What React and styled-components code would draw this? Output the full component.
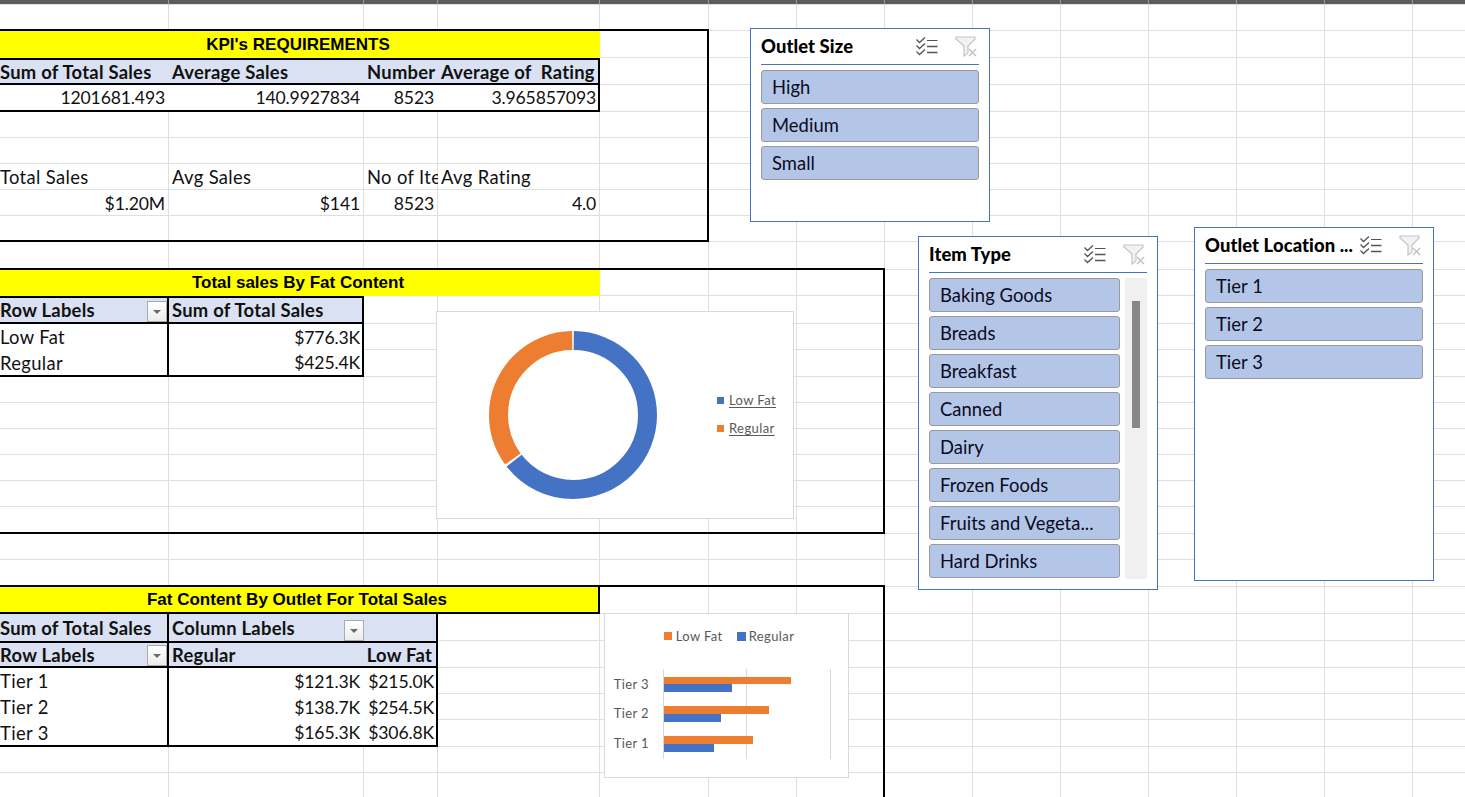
import styled, { createGlobalStyle } from "styled-components";

const colLines = [168, 363, 437, 599, 708, 796, 884, 972, 1060, 1148, 1236, 1324, 1412, 1500];
const rowLines = [
  4, 30, 57, 84, 111, 137, 163, 189, 215, 241, 269, 295, 323, 349, 376, 402,
  428, 454, 480, 506, 533, 559, 586, 613, 640, 667, 693, 719, 746, 772, 798,
];

const toTracks = (lines) =>
  lines.map((line, i) => `${i === 0 ? line + 1 : line - lines[i - 1]}px`).join(" ");

const GlobalStyle = createGlobalStyle`
  html, body {
    margin: 0;
    padding: 0;
    background: #ffffff;
    overflow: hidden;
  }
`;

const Page = styled.div`
  position: relative;
  width: 1465px;
  height: 797px;
  overflow: hidden;
  font-family: "Lato", "Liberation Sans", sans-serif;
  color: #111111;
`;

const Sheet = styled.div`
  display: grid;
  grid-template-columns: ${toTracks(colLines)};
  grid-template-rows: ${toTracks(rowLines)};
  width: 1501px;
  height: 799px;
`;

const GridCell = styled.div`
  box-sizing: border-box;
  grid-row: ${(p) => p.$row};
  grid-column: ${(p) => p.$col};
  border-right: 1px solid ${(p) => (p.$row === 1 ? "#9a9a9a" : "#dfdfdf")};
  border-bottom: 1px solid #dfdfdf;
  background: ${(p) => (p.$row === 1 ? "#5d5d5d" : "transparent")};
`;

const thick = "2px solid #000000";

const rightPad = (p) => {
  if (!p.$right) return "0";
  return p.$edges?.includes("r") ? "2px" : "4px";
};

const Cell = styled.div`
  box-sizing: border-box;
  grid-row: ${(p) => p.$row};
  grid-column: ${(p) => p.$col} / span ${(p) => p.$span || 1};
  display: flex;
  align-items: center;
  justify-content: ${(p) => (p.$right ? "flex-end" : "flex-start")};
  padding: 0 ${rightPad} 0 ${(p) => (p.$col === 1 ? "0" : "3px")};
  overflow: hidden;
  white-space: pre;
  font-size: ${(p) => (p.$right ? "17.6px" : "18.4px")};
  letter-spacing: ${(p) => (p.$right ? "-0.15px" : "0.35px")};
  background: ${(p) => p.$fill || "transparent"};
  border-top: ${(p) => (p.$edges?.includes("t") ? thick : "none")};
  border-right: ${(p) => (p.$edges?.includes("r") ? thick : "none")};
  border-bottom: ${(p) => (p.$edges?.includes("b") ? thick : "none")};
`;

const TitleCell = styled(Cell)`
  justify-content: center;
  padding: 0 4px 0 0;
  font-family: "Liberation Sans", Arial, sans-serif;
  font-size: 17px;
  letter-spacing: 0;
  font-weight: 700;
  background: #ffff00;
  color: #000000;
`;

const HeadCell = styled(Cell)`
  padding-right: ${(p) => (p.$right ? "4px" : "0")};
  font-size: 18.4px;
  letter-spacing: 0.26px;
  font-weight: 700;
  background: #d9e1f2;
`;

const Outline = styled.div`
  box-sizing: border-box;
  grid-row: ${(p) => p.$from} / ${(p) => p.$to};
  grid-column: 1 / ${(p) => p.$endCol};
  margin-top: -2px;
  border: ${thick};
  border-left: none;
  border-bottom: ${(p) => (p.$open ? "none" : thick)};
  pointer-events: none;
`;

const FilterButton = styled.span`
  box-sizing: border-box;
  display: flex;
  align-items: center;
  justify-content: center;
  flex: none;
  width: 20px;
  height: 21px;
  margin-left: auto;
  align-self: flex-end;
  border: 1px solid #ababab;
  background: linear-gradient(#ffffff, #ececec);
  &::after {
    content: "";
    border-left: 4px solid transparent;
    border-right: 4px solid transparent;
    border-top: 4px solid #6a6a6a;
  }
`;

const Slicer = styled.section`
  box-sizing: border-box;
  position: absolute;
  left: ${(p) => p.$x}px;
  top: ${(p) => p.$y}px;
  width: 240px;
  height: ${(p) => p.$h}px;
  padding: 0 10px;
  background: #ffffff;
  border: 1px solid #4472c4;
`;

const SlicerHead = styled.header`
  display: flex;
  align-items: center;
  height: 35px;
  border-bottom: 1px solid #4472c4;
`;

const SlicerTitle = styled.h3`
  flex: 1;
  margin: 0 0 2px;
  font-size: 18.4px;
  font-weight: 900;
  letter-spacing: 0.1px;
  white-space: nowrap;
  color: #000000;
`;

const HeadIcons = styled.div`
  display: flex;
  align-items: center;
  gap: 17px;
  margin-right: 2px;
`;

const SlicerBody = styled.div`
  display: flex;
  gap: 5px;
  margin-top: 5px;
`;

const SlicerList = styled.ul`
  flex: 1;
  display: flex;
  flex-direction: column;
  gap: 4px;
  margin: 0;
  padding: 0;
  list-style: none;
`;

const SlicerItem = styled.li`
  box-sizing: border-box;
  display: flex;
  align-items: center;
  height: 34px;
  padding-left: 10px;
  background: #b4c6e7;
  border: 1px solid #9a9a9a;
  border-radius: 3px;
  font-size: 18.4px;
  letter-spacing: 0.05px;
  color: #0b0b1e;
  white-space: nowrap;
`;

const ScrollTrack = styled.div`
  flex: none;
  width: 22px;
  height: 301px;
  padding: 23px 7px 0;
  box-sizing: border-box;
  background: #f0f0f0;
`;

const ScrollThumb = styled.div`
  height: 127px;
  background: #878787;
`;

const ChartFrame = styled.figure`
  box-sizing: border-box;
  position: absolute;
  left: ${(p) => p.$x}px;
  top: ${(p) => p.$y}px;
  width: ${(p) => p.$w}px;
  height: ${(p) => p.$h}px;
  margin: 0;
  background: #ffffff;
  border: 1px solid #d9d9d9;
`;

const DonutLayout = styled.div`
  display: flex;
  align-items: center;
  height: 100%;
  padding-left: 51px;
  gap: 59px;
`;

const DonutLegend = styled.div`
  display: flex;
  flex-direction: column;
  gap: 12px;
  margin-top: -2px;
`;

const LegendItem = styled.div`
  display: flex;
  align-items: center;
  gap: ${(p) => p.$gap || 5}px;
  font-size: 13px;
  letter-spacing: 0.4px;
  line-height: 16px;
  color: #595959;
`;

const Swatch = styled.i`
  display: block;
  width: ${(p) => p.$size || 7}px;
  height: ${(p) => p.$size || 7}px;
  background: ${(p) => p.$color};
`;

const LegendText = styled.span`
  text-decoration: ${(p) => (p.$link ? "underline" : "none")};
  text-underline-offset: 2px;
`;

const BarLegend = styled.div`
  display: flex;
  justify-content: center;
  gap: 14px;
  padding: 14px 0 0 5px;
`;

const PlotSvg = styled.svg`
  display: block;
  margin-top: 21px;
  font-family: "Lato", "Liberation Sans", sans-serif;
  font-size: 13px;
  letter-spacing: 0.4px;
`;

const blue = "#4472c4";
const orange = "#ed7d31";

const ChecklistIcon = () => (
  <svg width="22" height="19" viewBox="0 0 22 19" fill="none" stroke="#555555">
    <path d="M0.5 2.5L3.5 5.5L9 0.5M0.5 8.5L3.5 11.5L9 6.5M0.5 14.5L3.5 17.5L9 12.5" strokeWidth="1.3" />
    <path d="M11 3.5H21.5" strokeWidth="1" />
    <path d="M11 9.5H21.5M11 15.5H21.5" strokeWidth="1.7" />
  </svg>
);

const ClearFilterIcon = () => (
  <svg width="22" height="21" viewBox="0 0 22 21" fill="none">
    <path d="M1 1H20V3L13 10V17L9 20V10L1 3Z" fill="#f2f2f2" stroke="#c4c4c4" strokeWidth="1.2" />
    <path d="M14 13L21 20M21 13L14 20" stroke="#bcbcbc" strokeWidth="1.2" />
  </svg>
);

const SlicerBox = ({ title, x, y, h, items, scroll }) => (
  <Slicer $x={x} $y={y} $h={h}>
    <SlicerHead>
      <SlicerTitle>{title}</SlicerTitle>
      <HeadIcons>
        <ChecklistIcon />
        <ClearFilterIcon />
      </HeadIcons>
    </SlicerHead>
    <SlicerBody>
      <SlicerList>
        {items.map((item) => (
          <SlicerItem key={item}>{item}</SlicerItem>
        ))}
      </SlicerList>
      {scroll && (
        <ScrollTrack>
          <ScrollThumb />
        </ScrollTrack>
      )}
    </SlicerBody>
  </Slicer>
);

const tierBars = [
  { label: "Tier 3", y: 12, low: 127, reg: 68, lowH: 7 },
  { label: "Tier 2", y: 41, low: 105, reg: 57, lowH: 8 },
  { label: "Tier 1", y: 71, low: 89, reg: 50, lowH: 8 },
];

const gridCells = rowLines.flatMap((_, r) =>
  colLines.map((_, c) => <GridCell key={`${r}-${c}`} $row={r + 1} $col={c + 1} />)
);

export default function App() {
  return (
    <Page>
      <GlobalStyle />
      <Sheet>
        {gridCells}

        <TitleCell $row={3} $col={1} $span={4}>KPI's REQUIREMENTS</TitleCell>
        <HeadCell $row={4} $col={1} $edges="tb">Sum of Total Sales</HeadCell>
        <HeadCell $row={4} $col={2} $edges="tb">Average Sales</HeadCell>
        <HeadCell $row={4} $col={3} $edges="tb">Number</HeadCell>
        <HeadCell $row={4} $col={4} $edges="tbr">Average of  Rating</HeadCell>
        <Cell $row={5} $col={1} $right $fill="#fff" $edges="b">1201681.493</Cell>
        <Cell $row={5} $col={2} $right $fill="#fff" $edges="b">140.9927834</Cell>
        <Cell $row={5} $col={3} $right $fill="#fff" $edges="b">8523</Cell>
        <Cell $row={5} $col={4} $right $fill="#fff" $edges="br">3.965857093</Cell>

        <Cell $row={8} $col={1}>Total Sales</Cell>
        <Cell $row={8} $col={2}>Avg Sales</Cell>
        <Cell $row={8} $col={3}>No of Ite</Cell>
        <Cell $row={8} $col={4}>Avg Rating</Cell>
        <Cell $row={9} $col={1} $right>$1.20M</Cell>
        <Cell $row={9} $col={2} $right>$141</Cell>
        <Cell $row={9} $col={3} $right>8523</Cell>
        <Cell $row={9} $col={4} $right>4.0</Cell>
        <Outline $from={3} $to={11} $endCol={6} />

        <TitleCell $row={12} $col={1} $span={4}>Total sales By Fat Content</TitleCell>
        <HeadCell $row={13} $col={1} $edges="tbr">
          Row Labels<FilterButton />
        </HeadCell>
        <HeadCell $row={13} $col={2} $edges="tbr">Sum of Total Sales</HeadCell>
        <Cell $row={14} $col={1} $fill="#fff" $edges="r">Low Fat</Cell>
        <Cell $row={14} $col={2} $right $fill="#fff" $edges="r">$776.3K</Cell>
        <Cell $row={15} $col={1} $fill="#fff" $edges="rb">Regular</Cell>
        <Cell $row={15} $col={2} $right $fill="#fff" $edges="rb">$425.4K</Cell>
        <Outline $from={12} $to={22} $endCol={8} />

        <TitleCell $row={24} $col={1} $span={4} $edges="rb">Fat Content By Outlet For Total Sales</TitleCell>
        <HeadCell $row={25} $col={1} $edges="r">Sum of Total Sales</HeadCell>
        <HeadCell $row={25} $col={2}>
          Column Labels<FilterButton />
        </HeadCell>
        <HeadCell $row={25} $col={3} $edges="r" />
        <HeadCell $row={26} $col={1} $edges="tbr">
          Row Labels<FilterButton />
        </HeadCell>
        <HeadCell $row={26} $col={2} $edges="tb">Regular</HeadCell>
        <HeadCell $row={26} $col={3} $right $edges="tbr">Low Fat</HeadCell>
        <Cell $row={27} $col={1} $fill="#fff" $edges="r">Tier 1</Cell>
        <Cell $row={27} $col={2} $right $fill="#fff">$121.3K</Cell>
        <Cell $row={27} $col={3} $right $fill="#fff" $edges="r">$215.0K</Cell>
        <Cell $row={28} $col={1} $fill="#fff" $edges="r">Tier 2</Cell>
        <Cell $row={28} $col={2} $right $fill="#fff">$138.7K</Cell>
        <Cell $row={28} $col={3} $right $fill="#fff" $edges="r">$254.5K</Cell>
        <Cell $row={29} $col={1} $fill="#fff" $edges="rb">Tier 3</Cell>
        <Cell $row={29} $col={2} $right $fill="#fff" $edges="b">$165.3K</Cell>
        <Cell $row={29} $col={3} $right $fill="#fff" $edges="rb">$306.8K</Cell>
        <Outline $from={24} $to={32} $endCol={8} $open />
      </Sheet>

      <ChartFrame $x={436} $y={311} $w={358} $h={208}>
        <DonutLayout>
          <svg width="170" height="170" viewBox="0 0 170 170" fill="none">
            <g transform="rotate(-90 85 85)" strokeWidth="19">
              <circle cx="85" cy="85" r="74.5" stroke={blue} pathLength="360" strokeDasharray="231.6 128.4" strokeDashoffset="-0.6" />
              <circle cx="85" cy="85" r="74.5" stroke={orange} pathLength="360" strokeDasharray="125.6 234.4" strokeDashoffset="-233.8" />
            </g>
          </svg>
          <DonutLegend>
            <LegendItem>
              <Swatch $color={blue} />
              <LegendText $link>Low Fat</LegendText>
            </LegendItem>
            <LegendItem>
              <Swatch $color={orange} />
              <LegendText $link>Regular</LegendText>
            </LegendItem>
          </DonutLegend>
        </DonutLayout>
      </ChartFrame>

      <ChartFrame $x={604} $y={613} $w={245} $h={165}>
        <BarLegend>
          <LegendItem $gap={4}>
            <Swatch $color={orange} $size={8} />
            <LegendText>Low Fat</LegendText>
          </LegendItem>
          <LegendItem $gap={3}>
            <Swatch $color={blue} $size={9} />
            <LegendText>Regular</LegendText>
          </LegendItem>
        </BarLegend>
        <PlotSvg width="243" height="100" viewBox="0 0 243 100">
          {[58.5, 141.5, 225.5].map((x) => (
            <line key={x} x1={x} x2={x} y1="4" y2="94" stroke="#d9d9d9" />
          ))}
          {tierBars.map((t) => (
            <g key={t.label}>
              <text x="44" y={t.y + 12} textAnchor="end" fill="#595959">{t.label}</text>
              <rect x="59" y={t.y} width={t.low} height={t.lowH} fill={orange} />
              <rect x="59" y={t.y + t.lowH} width={t.reg} height="8" fill={blue} />
            </g>
          ))}
        </PlotSvg>
      </ChartFrame>

      <SlicerBox title="Outlet Size" x={750} y={28} h={194} items={["High", "Medium", "Small"]} />
      <SlicerBox
        title="Item Type"
        x={918}
        y={236}
        h={354}
        scroll
        items={["Baking Goods", "Breads", "Breakfast", "Canned", "Dairy", "Frozen Foods", "Fruits and Vegeta...", "Hard Drinks"]}
      />
      <SlicerBox title="Outlet Location ..." x={1194} y={227} h={354} items={["Tier 1", "Tier 2", "Tier 3"]} />
    </Page>
  );
}
